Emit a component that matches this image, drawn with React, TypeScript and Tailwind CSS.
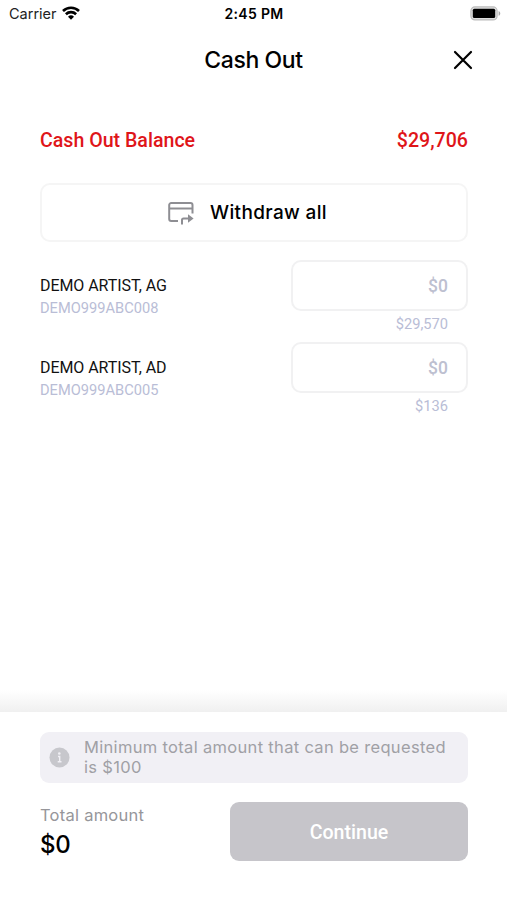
import { useState } from 'react';

interface Account { name: string; code: string; available: string; }

const ACCOUNTS: Account[] = [
  { name: 'DEMO ARTIST, AG', code: 'DEMO999ABC008', available: '$29,570' },
  { name: 'DEMO ARTIST, AD', code: 'DEMO999ABC005', available: '$136' },
];

function WifiIcon() {
  return (
    <svg className="mb-0.5" width="18" height="14" viewBox="0 0 18 14" fill="none" stroke="#000" strokeWidth="2.6">
      <path d="M1 5a11.4 11.4 0 0 1 16 0" />
      <path d="M3.9 8.2a7.3 7.3 0 0 1 10.2 0" />
      <path d="M9 13.7 6 10.7a4.3 4.3 0 0 1 6 0Z" fill="#000" stroke="none" />
    </svg>
  );
}

function BatteryIcon() {
  return (
    <svg width="31" height="15" viewBox="0 0 31 15">
      <rect x="0.9" y="0.9" width="26.2" height="13" rx="4" fill="#e0e0e0" stroke="#bcbcbc" strokeWidth="1.2" />
      <rect x="2.8" y="2.8" width="22.4" height="9.2" rx="1.5" fill="#000" />
      <path d="M28.6 5c2.2.7 2.2 4.1 0 4.8Z" fill="#a8a8a8" />
    </svg>
  );
}

function CardArrowIcon() {
  return (
    <svg width="26" height="23" viewBox="0 0 26 23" fill="none" stroke="#8e8e93" strokeWidth="2">
      <path d="M10 19H3.2A2 2 0 0 1 1.2 17V3A2 2 0 0 1 3.2 1H22.5a2 2 0 0 1 2 2V11.5" />
      <path d="M1.2 6.5H24.5" />
      <path d="M14 22.5V18a1.5 1.5 0 0 1 1.5-1.5H21" />
      <path d="M20 12.3 25.6 16.5 20 20.7Z" fill="#8e8e93" stroke="none" />
    </svg>
  );
}

function StatusBar() {
  return (
    <div className="grid h-[27px] grid-cols-3 items-center pl-[9px] pr-[6px] text-black">
      <div className="flex items-center gap-[5px] text-[14.5px] text-[#222]">
        Carrier
        <WifiIcon />
      </div>
      <div className="pr-[2px] text-center text-[14px] font-semibold tracking-[0.35px]">2:45 PM</div>
      <div className="flex justify-end"><BatteryIcon /></div>
    </div>
  );
}

function AccountRow({ account }: { account: Account }) {
  const [amount, setAmount] = useState('');
  return (
    <div className="flex h-[82px] justify-between font-['Roboto',sans-serif]">
      <div className="pt-[14px]">
        <div className="text-[16px] leading-[23px] tracking-[-0.07px] text-[#111]">{account.name}</div>
        <div className="text-[14.65px] leading-[23px] text-[#b9bdd6]">{account.code}</div>
      </div>
      <div className="w-[177px]">
        <input
          value={amount}
          onChange={e => setAmount(e.target.value)}
          placeholder="$0"
          className="h-[51px] w-full rounded-[10px] border-2 border-[#f1f1f2] bg-white px-[18px] text-right text-[17.5px] font-medium text-black outline-none placeholder:text-[#bdc0d0]"
        />
        <div className="pr-5 pt-[3px] text-right text-[14.65px] leading-[21px] text-[#b9bdd6]">{account.available}</div>
      </div>
    </div>
  );
}

export default function App() {
  return (
    <div className="flex h-[900px] w-[507px] flex-col overflow-hidden bg-white font-['Inter',sans-serif]">
      <StatusBar />
      <header className="grid h-[65px] grid-cols-[1fr_auto_1fr] items-center px-[34px]">
        <span />
        <h1 className="pt-0.5 text-[23px] font-medium tracking-[-0.4px] text-black">Cash Out</h1>
        <button aria-label="Close" className="justify-self-end">
          <svg width="20" height="20" viewBox="0 0 20 20" stroke="#000" strokeWidth="2.2" strokeLinecap="round">
            <path d="M2 2 18 18M18 2 2 18" />
          </svg>
        </button>
      </header>

      <main className="flex-1 pl-10 pr-[39px] pt-[37px]">
        <div className="flex h-6 items-center justify-between font-['Roboto',sans-serif] text-[19.6px] font-medium text-[#df1519]">
          <span>Cash Out Balance</span>
          <span>$29,706</span>
        </div>
        <button className="mt-[30px] flex h-[59px] w-full items-center justify-center gap-4 rounded-[10px] border-2 border-[#f5f5f5] pr-[13px] pt-px text-[19px] font-medium tracking-[0.35px] text-black">
          <CardArrowIcon />
          Withdraw all
        </button>
        <div className="mt-[18px]">
          {ACCOUNTS.map(a => <AccountRow key={a.code} account={a} />)}
        </div>
      </main>

      <div className="h-[22px] bg-linear-to-b from-white to-[#f0f0f0]" />
      <footer className="h-[188px] bg-white pl-10 pr-[39px] pt-5">
        <div className="flex h-[51px] items-center rounded-[9px] bg-[#f1f0f5] pb-px pl-[9px] text-[16.5px] leading-5 tracking-[0.32px] text-[#a0a0a5]">
          <svg className="mr-[14px] shrink-0" width="21" height="21" viewBox="0 0 21 21">
            <circle cx="10.5" cy="10.5" r="10" fill="#c7c7cc" />
            <circle cx="10.3" cy="6.5" r="1.3" fill="#f1f0f5" />
            <path d="M9 9.5h1.7v5M8.700 14.700h3.800" fill="none" stroke="#f1f0f5" strokeWidth="1.4" />
          </svg>
          <p>Minimum total amount that can be requested<br />is $100</p>
        </div>
        <div className="mt-[19px] flex justify-between">
          <div>
            <div className="pt-[2px] text-[16.5px] leading-[22px] tracking-[0.25px] text-[#96969a]">Total amount</div>
            <div className="mt-1 text-[24px] font-medium leading-[30px] tracking-[-0.2px] text-black">$0</div>
          </div>
          <button className="h-[59px] w-[238px] rounded-[9px] bg-[#c6c5ca] pt-0.5 font-['Roboto',sans-serif] text-[19.6px] font-medium text-white">
            Continue
          </button>
        </div>
      </footer>
    </div>
  );
}
